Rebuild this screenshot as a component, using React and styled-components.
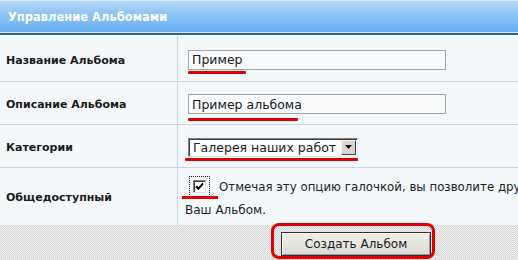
import React from "react";
import styled, { createGlobalStyle } from "styled-components";

const Global = createGlobalStyle`
  html, body { margin: 0; padding: 0; background: #ffffff; }
  body { width: 518px; height: 260px; overflow: hidden; font-family: "DejaVu Sans", Verdana, sans-serif; }
`;

const Panel = styled.div`
  width: 518px;
  height: 260px;
  overflow: hidden;
  display: flex;
  flex-direction: column;
  background: #f4f8fb;
`;

const Header = styled.div`
  height: 31px;
  border-top: 1px solid #d4e8fa;
  background: linear-gradient(#b2d8f8, #8cc3f4 45%, #66aff1);
  display: flex;
  align-items: center;
  padding-left: 8px;
  color: #ffffff;
  font-weight: bold;
  font-size: 11.5px;
`;

const HeaderRule = styled.div`
  height: 2px;
  border-top: 1px solid #d6e8f8;
  border-bottom: 1px solid #ffffff;
  background: #2f6194;
`;

const Row = styled.div`
  display: grid;
  grid-template-columns: 178px 1fr;
  height: ${(p) => p.$h}px;
  border-bottom: ${(p) => (p.$last ? "none" : "1px solid #c9d7e3")};
`;

const Label = styled.div`
  border-right: 1px solid #c9d7e3;
  display: flex;
  align-items: center;
  padding-left: 6px;
  padding-top: ${(p) => p.$pt || 0}px;
  font-weight: bold;
  font-size: 11px;
  color: #1a1a1a;
`;

const Cell = styled.div`
  display: flex;
  flex-direction: column;
  justify-content: center;
  padding-left: ${(p) => p.$pl || 10}px;
  padding-top: ${(p) => p.$pt || 0}px;
  font-size: 12px;
  color: #222;
  white-space: nowrap;
  overflow: hidden;
`;

const Marked = styled.div`
  position: relative;
  align-self: flex-start;
  &::after {
    content: "";
    position: absolute;
    left: ${(p) => p.$ul || 0}px;
    width: ${(p) => p.$uw}px;
    top: calc(100% + ${(p) => p.$ut || 1}px);
    height: 3px;
    border-radius: 1px;
    background: #e00000;
  }
`;

const TextBox = styled.div`
  box-sizing: border-box;
  width: 258px;
  height: 20px;
  border: 1px solid #a3a3a3;
  background: #f8fafc;
  padding-left: 3px;
  display: flex;
  align-items: center;
  font-size: 12.5px;
  color: #1a1a1a;
`;

const SelectBox = styled.div`
  box-sizing: border-box;
  width: 170px;
  height: 19px;
  border-top: 1px solid #808080;
  border-left: 1px solid #808080;
  border-right: 1px solid #e8e8e8;
  border-bottom: 1px solid #e8e8e8;
  box-shadow: inset 1px 1px 0 #404040;
  background: #ffffff;
  display: flex;
  align-items: center;
  justify-content: space-between;
  padding: 0 1px 0 4px;
  font-size: 12.5px;
  color: #1a1a1a;
`;

const ArrowBtn = styled.span`
  box-sizing: border-box;
  width: 15px;
  height: 15px;
  background: #d8d6cf;
  border-top: 1px solid #f4f4f4;
  border-left: 1px solid #f4f4f4;
  border-right: 1px solid #404040;
  border-bottom: 1px solid #404040;
  display: flex;
  align-items: center;
  justify-content: center;
`;

const CheckLine = styled.div`
  display: flex;
  align-items: center;
  gap: 9px;
  margin-left: 4px;
  font-size: 11.8px;
`;

const Focus = styled.div`
  position: relative;
  box-sizing: border-box;
  flex: none;
  width: 21px;
  height: 21px;
  border: 1px dotted #202020;
  display: flex;
  align-items: center;
  justify-content: center;
  &::after {
    content: "";
    position: absolute;
    left: -8px;
    width: 36px;
    top: 100%;
    height: 3px;
    background: #e00000;
  }
`;

const Check = styled.span`
  box-sizing: border-box;
  width: 13px;
  height: 13px;
  background: #ffffff;
  border-top: 1px solid #808080;
  border-left: 1px solid #808080;
  border-right: 1px solid #e0e0e0;
  border-bottom: 1px solid #e0e0e0;
  box-shadow: inset 1px 1px 0 #404040;
  display: flex;
  align-items: center;
  justify-content: center;
`;

const SecondLine = styled.div`
  margin-top: 6px;
`;

const Footer = styled.div`
  flex: 1;
  background: repeating-conic-gradient(#d3d3d3 0 25%, #f3f3f3 0 50%) 0 0 / 2px 2px;
  padding-left: 271px;
`;

const RedRing = styled.div`
  margin-top: -2px;
  width: 164px;
  height: 36px;
  box-sizing: border-box;
  border: 3px solid #e00000;
  border-radius: 8px;
  padding: 6px 2px 0 7px;
`;

const Button = styled.button`
  box-sizing: border-box;
  width: 150px;
  height: 24px;
  border: 1px solid #303030;
  box-shadow: inset 1px 1px 0 #ffffff, inset -1px -1px 0 #9a9a9a;
  background: linear-gradient(#f0efe9, #dcdbd3);
  font-family: "DejaVu Sans", Verdana, sans-serif;
  font-size: 12px;
  color: #1a1a1a;
  padding: 0;
`;

export default function App() {
  return (
    <>
      <Global />
      <Panel>
        <Header>Управление Альбомами</Header>
        <HeaderRule />
        <Row $h={45}>
          <Label $pt={4}>Название Альбома</Label>
          <Cell $pt={2}>
            <Marked $uw={58} $ut={1}>
              <TextBox>Пример</TextBox>
            </Marked>
          </Cell>
        </Row>
        <Row $h={42}>
          <Label $pt={2}>Описание Альбома</Label>
          <Cell $pt={2}>
            <Marked $uw={110} $ut={4}>
              <TextBox>Пример альбома</TextBox>
            </Marked>
          </Cell>
        </Row>
        <Row $h={42}>
          <Label $pt={2}>Категории</Label>
          <Cell $pt={2}>
            <Marked $uw={173} $ul={-3} $ut={1}>
              <SelectBox>
                Галерея наших работ
                <ArrowBtn>
                  <svg width="7" height="4" viewBox="0 0 7 4">
                    <path d="M0 0h7L3.5 4z" fill="#000" />
                  </svg>
                </ArrowBtn>
              </SelectBox>
            </Marked>
          </Cell>
        </Row>
        <Row $h={57} $last>
          <Label $pt={2}>Общедоступный</Label>
          <Cell $pl={7} $pt={0}>
            <CheckLine>
              <Focus>
                <Check>
                  <svg width="9" height="9" viewBox="0 0 9 9">
                    <path d="M1 4.2l2.4 2.6L8 1.4" stroke="#000" strokeWidth="2" fill="none" />
                  </svg>
                </Check>
              </Focus>
              Отмечая эту опцию галочкой, вы позволите другим
            </CheckLine>
            <SecondLine>Ваш Альбом.</SecondLine>
          </Cell>
        </Row>
        <Footer>
          <RedRing>
            <Button>Создать Альбом</Button>
          </RedRing>
        </Footer>
      </Panel>
    </>
  );
}
